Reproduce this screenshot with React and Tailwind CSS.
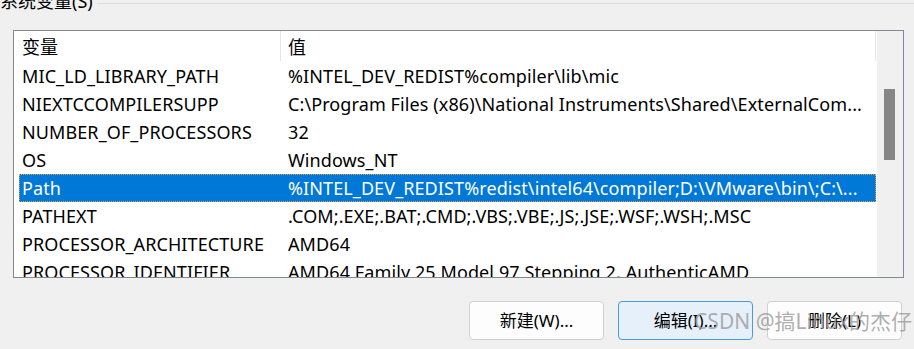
import React from 'react';

const rows = [
  ['MIC_LD_LIBRARY_PATH', '%INTEL_DEV_REDIST%compiler\\lib\\mic'],
  ['NIEXTCCOMPILERSUPP', 'C:\\Program Files (x86)\\National Instruments\\Shared\\ExternalCom...'],
  ['NUMBER_OF_PROCESSORS', '32'],
  ['OS', 'Windows_NT'],
  ['Path', '%INTEL_DEV_REDIST%redist\\intel64\\compiler;D:\\VMware\\bin\\;C:\\...'],
  ['PATHEXT', '.COM;.EXE;.BAT;.CMD;.VBS;.VBE;.JS;.JSE;.WSF;.WSH;.MSC'],
  ['PROCESSOR_ARCHITECTURE', 'AMD64'],
  ['PROCESSOR_IDENTIFIER', 'AMD64 Family 25 Model 97 Stepping 2, AuthenticAMD'],
];

const font = { fontFamily: '"Noto Sans", "Noto Sans CJK SC", sans-serif' };

export default function App() {
  return (
    <div
      className="w-[914px] h-[349px] bg-[#f0f0f0] overflow-hidden text-black text-[18px] leading-none"
      style={font}
    >
      {/* group title */}
      <div className="flex items-start h-[30px]">
        <span className="-mt-[9px] text-[18px] leading-[20px] pr-1">系统变量(S)</span>
        <div className="flex-1 mt-[3px] border-t border-[#dcdcdc]" />
      </div>

      {/* list view */}
      <div className="ml-[13px] w-[891px] h-[248px] border border-[#828790] bg-white flex overflow-hidden">
        <div className="w-[862px] flex flex-col">
          <div className="h-[31px] flex shrink-0">
            <div className="w-[266px] pl-[8px] flex items-center">变量</div>
            <div className="w-px h-[30px] bg-[#e5e5e5]" />
            <div className="flex-1 pl-[7px] flex items-center">值</div>
            <div className="w-px h-[30px] bg-[#e5e5e5]" />
          </div>
          {rows.map(([name, value]) => {
            const sel = name === 'Path';
            return (
              <div
                key={name}
                className={
                  'ml-[5px] h-[28px] shrink-0 flex leading-[28px] whitespace-nowrap overflow-hidden tracking-[0.1px] ' +
                  (sel ? 'bg-[#0078d7] text-white outline-1 outline-dotted -outline-offset-1 outline-[#e8a040]' : '')
                }
              >
                <div className="w-[269px] pl-[3px]">{name}</div>
                <div className="flex-1 overflow-hidden">{value}</div>
              </div>
            );
          })}
        </div>
        {/* scrollbar */}
        <div className="w-[27px] h-full bg-[#f0f0f0] border-l border-white pt-[58px] pl-[7px]">
          <div className="w-[11px] h-[71px] bg-[#868686]" />
        </div>
      </div>

      {/* buttons */}
      <div className="relative flex justify-end gap-[14px] pr-[12px] mt-[23px]">
        <button className="w-[135px] h-[39px] rounded-[4px] border border-[#d0d0d0] bg-[#fdfdfd] text-[17px]">
          新建(W)...
        </button>
        <button className="w-[135px] h-[39px] rounded-[4px] border border-[#4a9ade] bg-[#e6f0fa] text-[17px]">
          编辑(I)...
        </button>
        <button className="w-[135px] h-[39px] rounded-[4px] border border-[#d0d0d0] bg-[#fdfdfd] text-[17px]">
          删除(L)
        </button>
        <div className="absolute right-[2px] top-[10px] text-[21px] text-[#9a9a9a]/80 whitespace-nowrap pointer-events-none">
          CSDN @搞Linux的杰仔
        </div>
      </div>
    </div>
  );
}
